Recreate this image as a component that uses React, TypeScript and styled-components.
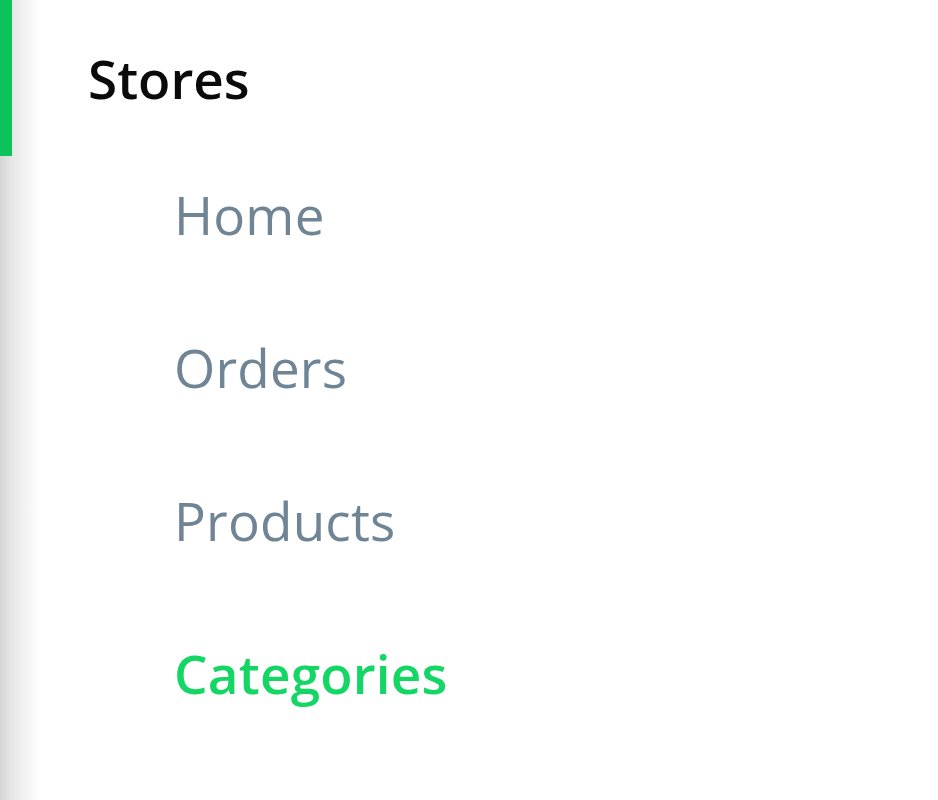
import React from "react";
import styled, { createGlobalStyle } from "styled-components";

const GlobalStyle = createGlobalStyle`
  html, body {
    margin: 0;
    padding: 0;
    background: #ffffff;
  }
  body {
    font-family: "Open Sans", "Noto Sans", sans-serif;
  }
`;

const Sidebar = styled.nav`
  width: 100%;
  height: 800px;
  background: linear-gradient(
    to right,
    #d6d6d6 0px,
    #e6e6e6 12px,
    #f2f2f2 24px,
    #fafafa 34px,
    #ffffff 40px
  );
  display: flex;
  flex-direction: column;
`;

const SectionHeader = styled.div`
  display: flex;
  align-items: center;
  height: 156px;
`;

const Marker = styled.span`
  width: 12px;
  height: 100%;
  background-color: #0cc25a;
`;

const SectionTitle = styled.h2`
  margin: 0 0 0 76px;
  font-size: 53px;
  font-weight: 600;
  line-height: normal;
  color: #0a0a0a;
`;

const NavList = styled.ul`
  list-style: none;
  margin: 22px 0 0;
  padding: 0 0 0 174px;
  display: flex;
  flex-direction: column;
  gap: 80px;
`;

const NavItem = styled.li<{ $active?: boolean }>`
  font-size: 53px;
  line-height: normal;
  letter-spacing: 0.2px;
  font-weight: ${props => (props.$active ? 600 : 400)};
  color: ${props => (props.$active ? "#14d664" : "#6f8595")};
  cursor: pointer;
`;

const links = ["Home", "Orders", "Products", "Categories"];

const App: React.FunctionComponent = () => {
  return (
    <>
      <GlobalStyle />
      <Sidebar>
        <SectionHeader>
          <Marker />
          <SectionTitle>Stores</SectionTitle>
        </SectionHeader>
        <NavList>
          {links.map(link => (
            <NavItem key={link} $active={link === "Categories"}>
              {link}
            </NavItem>
          ))}
        </NavList>
      </Sidebar>
    </>
  );
};

export default App;
